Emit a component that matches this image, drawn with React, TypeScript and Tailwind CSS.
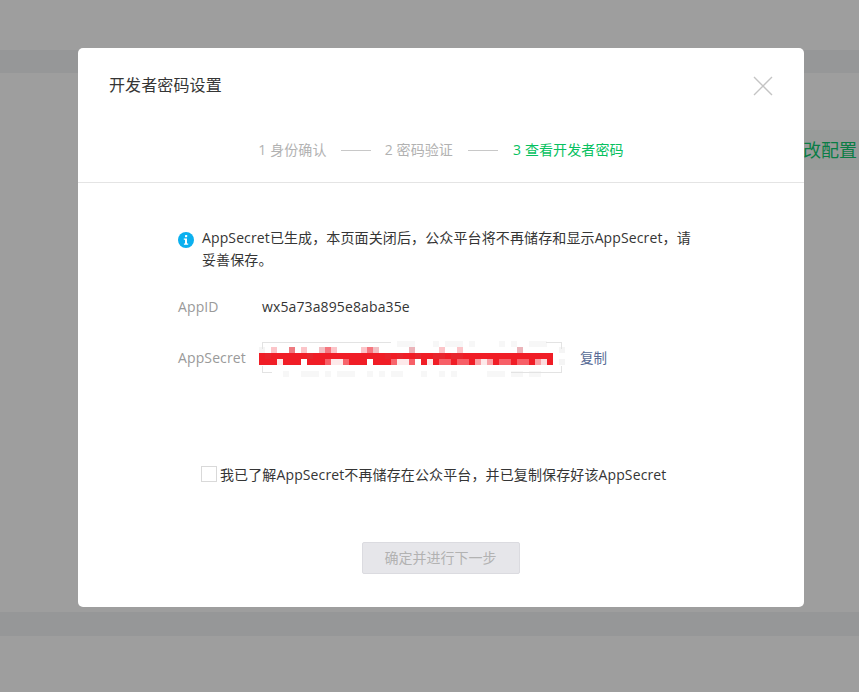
const FONT = "font-['Open_Sans','Noto_Sans_CJK_SC',sans-serif]";

type Cell = [number, number, string];
const row = (y: number, list: [number, string][]): Cell[] => list.map(([x, c]) => [x, y, c] as Cell);
const faint = (y: number, list: number[]): Cell[] => list.map((x) => [x, y, "#f7f7f7"] as Cell);

// x in 6px cells from the left of the mosaic, y in 6px cells from its top
const cells: Cell[] = [
  ...faint(0, [23, 24, 25, 29, 31, 32, 33, 35, 40, 42, 45, 46, 47]),
  ...row(1, [[2,"#fcc5c9"],[5,"#ee7a80"],[7,"#fcc5c9"],[10,"#f2bfc3"],[11,"#f6777f"],[12,"#fcc5c9"],[17,"#fcc5c9"],[18,"#f6777f"],[19,"#f2bfc3"],[25,"#ebb4ba"],[30,"#fcc5c9"],[33,"#fcc5c9"],[43,"#ebb4ba"],[0,"#f5f5f5"],[50,"#f5f5f5"]]),
  ...row(2, [[1,"#e8242c"],[8,"#e6262d"],[21,"#e8242c"],[23,"#e8242c"],[26,"#e8262e"],[29,"#e8262e"],[30,"#e8262e"],[32,"#e8262e"],[33,"#e8262e"]]),
  ...row(3, [[3,"#fde9ea"],[7,"#ffffff"],[11,"#f75f67"],[12,"#fde9ea"],[13,"#fde9ea"],[14,"#f7656c"],[18,"#ffffff"],[22,"#f7656c"],[23,"#fde9ea"],[24,"#fde9ea"],[25,"#f75f67"],[26,"#ffffff"],[28,"#fde9ea"],[30,"#f75f67"],[31,"#f75f67"],[33,"#f75f67"],[34,"#f75f67"],[36,"#f9a0a5"],[37,"#fde9ea"],[38,"#f9a0a5"],[40,"#f75f67"],[41,"#f75f67"],[43,"#f75f67"],[44,"#f75f67"],[46,"#f9a0a5"],[47,"#fbdcde"],[50,"#f5f5f5"]]),
  ...faint(5, [4, 7, 8, 9, 11, 13, 14, 15, 18, 20, 22, 23, 27, 30, 32, 38, 39, 40, 42, 43, 45, 46]),
];

function Mosaic() {
  return (
    <svg width="310" height="36" viewBox="0 0 310 36" shapeRendering="crispEdges" className="block">
      <rect x="0" y="12" width="294" height="12" fill="#f01d26" />
      {cells.map(([x, y, c], i) => (
        <rect key={i} x={x * 6} y={y * 6} width="6" height="6" fill={c} />
      ))}
      <path
        d="M3.5 8V1.5H132 M3.5 25V31.5H13 M252 31.5H302.5V25 M287 1.5H302.5V8"
        fill="none"
        stroke="#e3e3e3"
      />
    </svg>
  );
}

export default function App() {
  return (
    <div className={`relative h-[692px] w-[859px] overflow-hidden bg-[#9e9e9e] tracking-[0.12px] ${FONT}`}>
      <div className="h-[50px]" />
      <div className="h-[23px] bg-[#969798]" />
      <div className="mt-[57px] flex h-[40px] items-center justify-end">
        <div className="flex h-[40px] w-[55px] items-center justify-end bg-[#999b9a] pr-[2px]">
          <span className="whitespace-nowrap text-[18px] leading-[24px] tracking-normal text-[#0a7d45]">改配置</span>
        </div>
      </div>
      <div className="mt-[442px] h-[24px] bg-[#969798]" />

      <div className="absolute left-[78px] top-[48px] flex h-[559px] w-[726px] flex-col rounded-[5px] bg-white">
        <div className="flex h-[72px] items-start justify-between pl-[31px] pr-[31px] pt-[26px]">
          <h2 className="text-[16px] leading-[22px] text-[#353535]">开发者密码设置</h2>
          <svg width="20" height="20" viewBox="0 0 20 20" className="mt-0.5">
            <path d="M1 1 L19 19 M19 1 L1 19" stroke="#c4c4c4" strokeWidth="1.4" fill="none" />
          </svg>
        </div>

        <div className="flex h-[63px] items-start justify-center border-b border-[#e4e4e4] pt-[20px] text-[14px] leading-[20px] text-[#b2b2b2]">
          <div className="flex items-center">
            <span>1 身份确认</span>
            <span className="mx-[14px] h-px w-[30px] bg-[#c8c8c8]" />
            <span>2 密码验证</span>
            <span className="mx-[15px] h-px w-[30px] bg-[#c8c8c8]" />
            <span className="text-[#07c160]">3 查看开发者密码</span>
          </div>
        </div>

        <div className="pl-[100px] pt-[44px] text-[14px] text-[#353535]">
          <div className="flex w-[520px] items-start gap-[8px] leading-[22px]">
            <svg width="16" height="16" viewBox="0 0 16 16" className="mt-[5px] shrink-0">
              <circle cx="8" cy="8" r="8" fill="#0bb0ef" />
              <rect x="7" y="3" width="2.2" height="2.2" rx="0.6" fill="#fff" />
              <path d="M5.8 6.6H9v5h1.2v1.2H5.9v-1.2H7V7.8H5.8z" fill="#fff" />
            </svg>
            <p>AppSecret已生成，本页面关闭后，公众平台将不再储存和显示AppSecret，请妥善保存。</p>
          </div>

          <div className="mt-[24px] flex h-[22px] items-center">
            <span className="w-[84px] text-[#9a9a9a]">AppID</span>
            <span>wx5a73a895e8aba35e</span>
          </div>

          <div className="mt-[24px] flex h-[36px] items-start">
            <span className="mt-[6px] w-[81px] leading-[22px] text-[#9a9a9a]">AppSecret</span>
            <Mosaic />
            <a className="ml-[11px] mt-[7px] text-[13.5px] leading-[20px] tracking-normal text-[#576b95]">复制</a>
          </div>

          <label className="ml-[23px] mt-[86px] flex h-[22px] items-center gap-[3px]">
            <span className="h-4 w-4 border border-[#d9d9d9] bg-white" />
            <span>我已了解AppSecret不再储存在公众平台，并已复制保存好该AppSecret</span>
          </label>
        </div>

        <div className="mt-[57px] flex justify-center">
          <button className="mr-[1px] h-[32px] w-[158px] rounded-[2px] border border-[#dbdbe0] bg-[#e6e6ea] pb-[2px] text-[14px] tracking-normal text-[#b2b2b2]">
            确定并进行下一步
          </button>
        </div>
      </div>
    </div>
  );
}
